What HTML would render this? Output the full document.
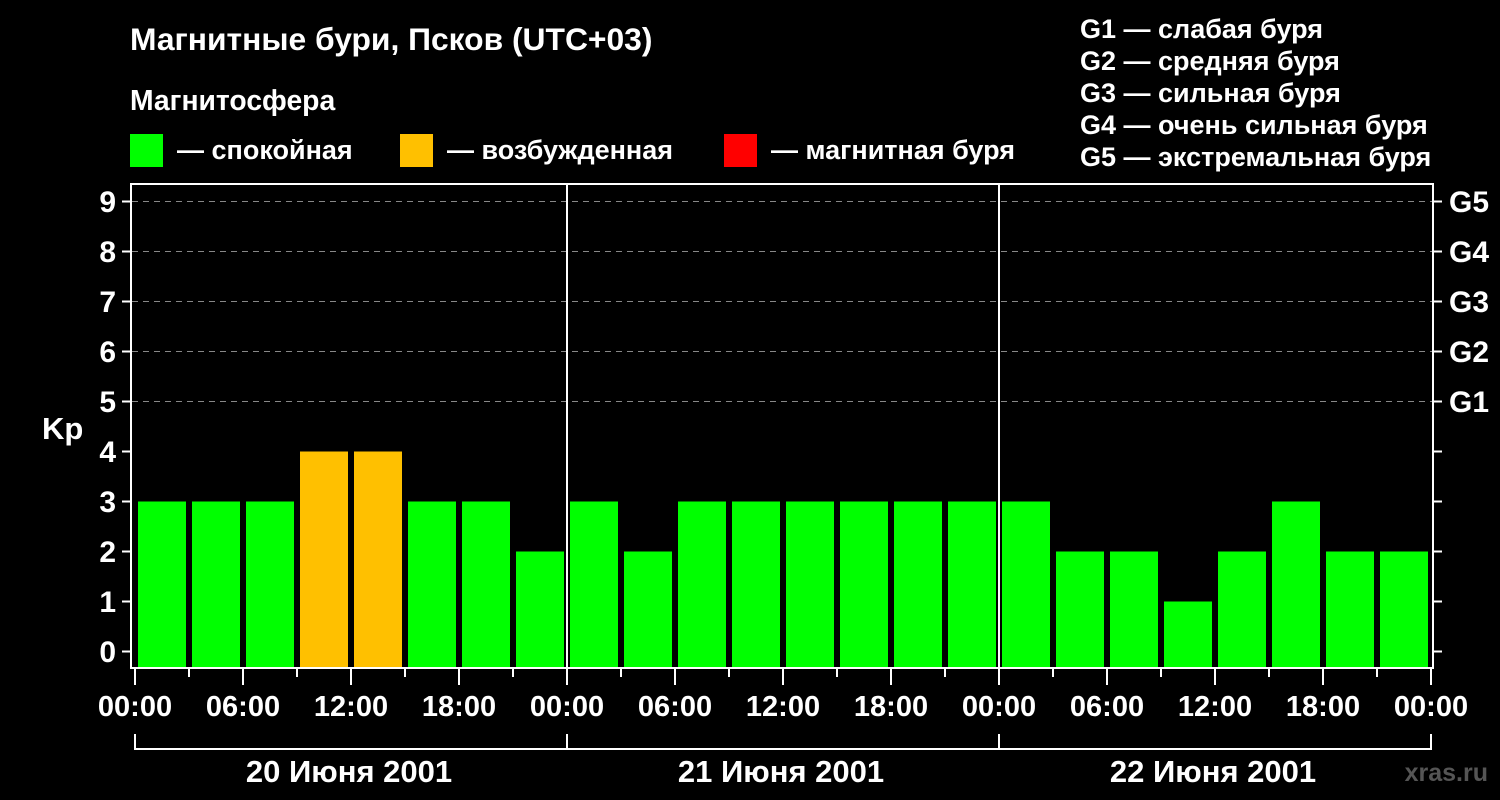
<!DOCTYPE html>
<html><head><meta charset="utf-8"><style>
html,body{margin:0;padding:0;background:#000;}
svg{display:block}
text{font-family:"Liberation Sans",Arial,sans-serif;font-weight:bold;fill:#fff}
</style></head><body>
<svg width="1500" height="800" xmlns="http://www.w3.org/2000/svg">
<rect width="1500" height="800" fill="#000"/>
<text x="130" y="50" font-size="31.8">Магнитные бури, Псков (UTC+03)</text>
<text x="130" y="110" font-size="28.3">Магнитосфера</text>
<rect x="130" y="134" width="33" height="33" fill="#00ff00"/>
<text x="177" y="159" font-size="27">— спокойная</text>
<rect x="400" y="134" width="33" height="33" fill="#ffc000"/>
<text x="447" y="159" font-size="27">— возбужденная</text>
<rect x="724" y="134" width="33" height="33" fill="#ff0000"/>
<text x="771" y="159" font-size="27">— магнитная буря</text>
<text x="1080" y="38" font-size="27">G1 — слабая буря</text>
<text x="1080" y="70" font-size="27">G2 — средняя буря</text>
<text x="1080" y="102" font-size="27">G3 — сильная буря</text>
<text x="1080" y="134" font-size="27">G4 — очень сильная буря</text>
<text x="1080" y="166" font-size="27">G5 — экстремальная буря</text>
<g fill="#00ff00">
<rect x="138" y="501.5" width="48" height="166.5"/>
<rect x="192" y="501.5" width="48" height="166.5"/>
<rect x="246" y="501.5" width="48" height="166.5"/>
<rect x="300" y="451.5" width="48" height="216.5" fill="#ffc000"/>
<rect x="354" y="451.5" width="48" height="216.5" fill="#ffc000"/>
<rect x="408" y="501.5" width="48" height="166.5"/>
<rect x="462" y="501.5" width="48" height="166.5"/>
<rect x="516" y="551.5" width="48" height="116.5"/>
<rect x="570" y="501.5" width="48" height="166.5"/>
<rect x="624" y="551.5" width="48" height="116.5"/>
<rect x="678" y="501.5" width="48" height="166.5"/>
<rect x="732" y="501.5" width="48" height="166.5"/>
<rect x="786" y="501.5" width="48" height="166.5"/>
<rect x="840" y="501.5" width="48" height="166.5"/>
<rect x="894" y="501.5" width="48" height="166.5"/>
<rect x="948" y="501.5" width="48" height="166.5"/>
<rect x="1002" y="501.5" width="48" height="166.5"/>
<rect x="1056" y="551.5" width="48" height="116.5"/>
<rect x="1110" y="551.5" width="48" height="116.5"/>
<rect x="1164" y="601.5" width="48" height="66.5"/>
<rect x="1218" y="551.5" width="48" height="116.5"/>
<rect x="1272" y="501.5" width="48" height="166.5"/>
<rect x="1326" y="551.5" width="48" height="116.5"/>
<rect x="1380" y="551.5" width="48" height="116.5"/>
</g>
<g stroke="#888" stroke-width="1" stroke-dasharray="6,5">
<line x1="132" y1="201.5" x2="1432" y2="201.5"/>
<line x1="132" y1="251.5" x2="1432" y2="251.5"/>
<line x1="132" y1="301.5" x2="1432" y2="301.5"/>
<line x1="132" y1="351.5" x2="1432" y2="351.5"/>
<line x1="132" y1="401.5" x2="1432" y2="401.5"/>
</g>
<g stroke="#fff" stroke-width="2" fill="none">
<rect x="131" y="184" width="1302" height="484"/>
<line x1="567" y1="184" x2="567" y2="668"/>
<line x1="999" y1="184" x2="999" y2="668"/>
<path d="M122 201.5h9M122 251.5h9M122 301.5h9M122 351.5h9M122 401.5h9M122 451.5h9M122 501.5h9M122 551.5h9M122 601.5h9M122 651.5h9"/>
<path d="M1433 201.5h9M1433 251.5h9M1433 301.5h9M1433 351.5h9M1433 401.5h9M1433 451.5h9M1433 501.5h9M1433 551.5h9M1433 601.5h9M1433 651.5h9"/>
<path d="M135 668v17M243 668v17M351 668v17M459 668v17M567 668v17M675 668v17M783 668v17M891 668v17M999 668v17M1107 668v17M1215 668v17M1323 668v17M1431 668v17"/>
<path d="M189 668v9M297 668v9M405 668v9M513 668v9M621 668v9M729 668v9M837 668v9M945 668v9M1053 668v9M1161 668v9M1269 668v9M1377 668v9"/>
<path d="M135 734v15H1431v-15M567 734v15M999 734v15"/>
</g>
<g font-size="30" text-anchor="end">
<text x="116" y="212">9</text><text x="116" y="262">8</text><text x="116" y="312">7</text><text x="116" y="362">6</text><text x="116" y="412">5</text><text x="116" y="462">4</text><text x="116" y="512">3</text><text x="116" y="562">2</text><text x="116" y="612">1</text><text x="116" y="662">0</text>
</g>
<text x="42" y="439" font-size="31">Kp</text>
<g font-size="30">
<text x="1449" y="212">G5</text><text x="1449" y="262">G4</text><text x="1449" y="312">G3</text><text x="1449" y="362">G2</text><text x="1449" y="412">G1</text>
</g>
<g font-size="29" text-anchor="middle">
<text x="135" y="716">00:00</text><text x="243" y="716">06:00</text><text x="351" y="716">12:00</text><text x="459" y="716">18:00</text><text x="567" y="716">00:00</text><text x="675" y="716">06:00</text><text x="783" y="716">12:00</text><text x="891" y="716">18:00</text><text x="999" y="716">00:00</text><text x="1107" y="716">06:00</text><text x="1215" y="716">12:00</text><text x="1323" y="716">18:00</text><text x="1431" y="716">00:00</text>
</g>
<g font-size="31" text-anchor="middle">
<text x="349" y="782">20 Июня 2001</text><text x="781" y="782">21 Июня 2001</text><text x="1213" y="782">22 Июня 2001</text>
</g>
<text x="1488" y="781" font-size="25" text-anchor="end" style="fill:#555">xras.ru</text>
</svg>
</body></html>
